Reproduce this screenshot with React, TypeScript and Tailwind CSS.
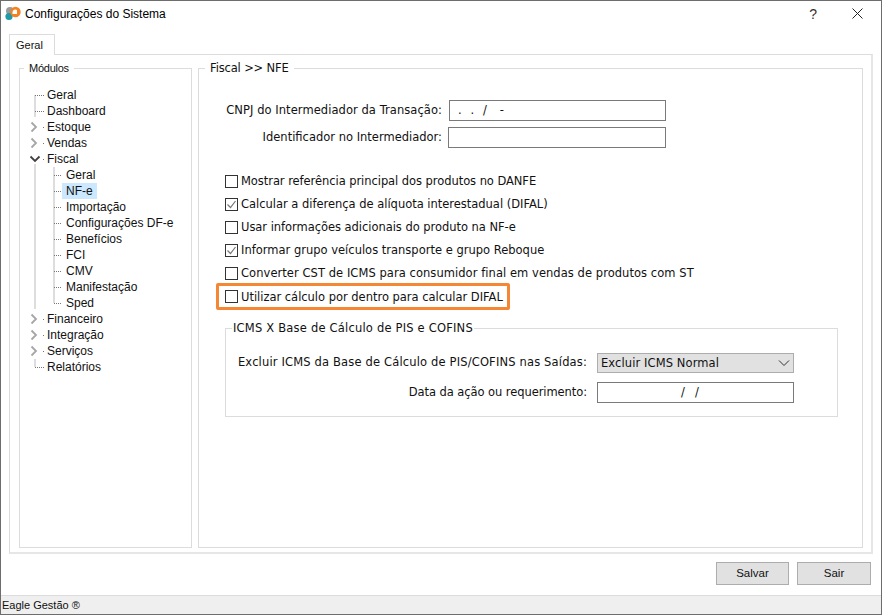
import React from "react";

const tahoma = "font-['Liberation_Sans',sans-serif]";
const verdana = "font-['DejaVu_Sans',sans-serif]";

type Row = {
  label: string;
  level: 0 | 1;
  chevron?: "right" | "down";
  guide: string;
  selected?: boolean;
};

const L1 = "M8 0V16M27 0V16M27 8H36";
const rows: Row[] = [
  { label: "Geral", level: 0, guide: "M8 8V16M8 8H17" },
  { label: "Dashboard", level: 0, guide: "M8 0V13M8 8H17" },
  { label: "Estoque", level: 0, chevron: "right", guide: "M16 8H17" },
  { label: "Vendas", level: 0, chevron: "right", guide: "M16 8H17" },
  { label: "Fiscal", level: 0, chevron: "down", guide: "M16 8H17M8 13V16" },
  { label: "Geral", level: 1, guide: L1 },
  { label: "NF-e", level: 1, selected: true, guide: "M8 0V16M27 0V16M27 8H35" },
  { label: "Importação", level: 1, guide: L1 },
  { label: "Configurações DF-e", level: 1, guide: L1 },
  { label: "Benefícios", level: 1, guide: L1 },
  { label: "FCI", level: 1, guide: L1 },
  { label: "CMV", level: 1, guide: L1 },
  { label: "Manifestação", level: 1, guide: L1 },
  { label: "Sped", level: 1, guide: "M8 0V14M27 0V8M27 8H36" },
  { label: "Financeiro", level: 0, chevron: "right", guide: "M16 8H17" },
  { label: "Integração", level: 0, chevron: "right", guide: "M16 8H17" },
  { label: "Serviços", level: 0, chevron: "right", guide: "M16 8H17" },
  { label: "Relatórios", level: 0, guide: "M8 0V8M8 8H17" },
];

function TreeRow({ row }: { row: Row }) {
  const w = row.level === 0 ? 20 : 35;
  return (
    <div className="flex h-4 items-center">
      <svg width={w} height={16} className="shrink-0" fill="none">
        <path d={row.guide} stroke="#777" strokeWidth="1" strokeDasharray="1 1" transform="translate(0 0.5)" />
        {row.chevron === "right" && <path d="M4.5 3.5L9 8L4.5 12.5" stroke="#a6a6a6" strokeWidth="1.8" />}
        {row.chevron === "down" && <path d="M3.5 5.5L8 10L12.5 5.5" stroke="#404040" strokeWidth="1.8" />}
      </svg>
      <span className={`h-4 whitespace-nowrap text-[12px] leading-4 ${row.level === 1 ? "px-1" : ""} ${row.selected ? "bg-[#cce8ff]" : ""}`}>
        {row.label}
      </span>
    </div>
  );
}

function Check({ checked, label, track }: { checked?: boolean; label: string; track: string }) {
  return (
    <div className="flex h-[14px] items-center gap-[3px]">
      <span className="flex h-[13px] w-[13px] shrink-0 items-center justify-center border border-[#333] bg-white">
        {checked && (
          <svg width="11" height="11" fill="none">
            <path d="M1.5 5.5L4.5 8.5L9.5 2" stroke="#777" strokeWidth="1.2" />
          </svg>
        )}
      </span>
      <span className={`whitespace-nowrap text-[11.5px] leading-[14px] ${track}`}>{label}</span>
    </div>
  );
}

export default function App() {
  return (
    <div className={`flex h-[615px] w-[882px] flex-col border border-[#6d6d6d] bg-white text-[#111] ${verdana}`}>
      <div className={`flex h-[29px] shrink-0 items-center pb-[4px] ${tahoma}`}>
        <svg width="17" height="15" viewBox="0 0 17 15" className="ml-[3px] shrink-0">
          <circle cx="6" cy="5" r="4" fill="#9a9a9a" />
          <circle cx="5" cy="10.5" r="3.6" fill="#1f9aa8" />
          <circle cx="11.5" cy="6" r="5.2" fill="#f58220" />
          <path d="M8.5 8V6A3 3 0 0 1 13 4V8Z" fill="#ffffff" />
        </svg>
        <span className="ml-[4px] text-[12px] leading-4 text-black">Configurações do Sistema</span>
        <span className="ml-auto mr-[35px] text-[14px] leading-4 text-[#333]">?</span>
        <svg width="11" height="11" className="mr-[18px]" fill="none">
          <path d="M0.5 0.5L10.5 10.5M10.5 0.5L0.5 10.5" stroke="#222" />
        </svg>
      </div>

      <div className="flex min-h-0 flex-1 flex-col px-[8px] pt-[4px]">
        <div className={`relative z-10 -mb-px flex h-[21px] w-[46px] items-center self-start border-x border-t border-[#dcdcdc] bg-white pl-[6px] text-[11px] ${tahoma}`}>
          Geral
        </div>
        <div className="flex h-[500px] gap-[6px] border-b-2 border-l border-r-2 border-t border-b-[#e6e6e6] border-l-[#dcdcdc] border-r-[#e6e6e6] border-t-[#dcdcdc] pl-[9px] pt-[6px]">
          <fieldset className={`h-[487px] w-[173px] shrink-0 border border-[#dcdcdc] ${tahoma}`}>
            <legend className="ml-[4px] px-[5px] text-[11px] leading-[14px] tracking-[-0.25px]">Módulos</legend>
            <div className="pl-[7px] pt-[12px]">
              {rows.map((r, i) => (
                <TreeRow key={i} row={r} />
              ))}
            </div>
          </fieldset>

          <fieldset className="h-[487px] w-[665px] shrink-0 border border-[#dcdcdc]">
            <legend className="ml-[6px] px-[5px] text-[11.5px] leading-[14px] tracking-[-0.15px]">Fiscal &gt;&gt; NFE</legend>
            <div className="flex flex-col pl-[26px] pt-[25px] text-[11.5px]">
              <div className="flex h-[21px] items-center">
                <span className="w-[217px] whitespace-nowrap text-right tracking-[0.06px]">CNPJ do Intermediador da Transação:</span>
                <div className="ml-[7px] h-[21px] w-[217px] border border-[#7a7a7a] pl-[8px] leading-[19px] tracking-[0.5px]">.&nbsp;&nbsp;.&nbsp;&nbsp;/&nbsp;&nbsp;&nbsp;-</div>
              </div>
              <div className="mt-[6px] flex h-[21px] items-center">
                <span className="w-[217px] whitespace-nowrap text-right">Identificador no Intermediador:</span>
                <div className="ml-[6px] h-[21px] w-[218px] border border-[#7a7a7a]"></div>
              </div>

              <div className="mt-[26px] flex flex-col gap-[9px]">
                <Check track="tracking-[-0.06px]" label="Mostrar referência principal dos produtos no DANFE" />
                <Check track="tracking-[-0.02px]" checked label="Calcular a diferença de alíquota interestadual (DIFAL)" />
                <Check track="tracking-[-0.04px]" label="Usar informações adicionais do produto na NF-e" />
                <Check track="tracking-[0px]" checked label="Informar grupo veículos transporte e grupo Reboque" />
                <Check track="tracking-[0.055px]" label="Converter CST de ICMS para consumidor final em vendas de produtos com ST" />
              </div>
              <div className="ml-[-9px] mt-[3px] flex h-[27px] w-[294px] items-center rounded-[2px] border-[3px] border-[#f58634] pl-[6px]">
                <Check track="tracking-[-0.02px]" label="Utilizar cálculo por dentro para calcular DIFAL" />
              </div>

              <fieldset className="mt-[11px] h-[96px] w-[613px] border border-[#dcdcdc]">
                <legend className="ml-[6px] px-px text-[11.5px] leading-[14px] tracking-[0.2px]">ICMS X Base de Cálculo de PIS e COFINS</legend>
                <div className="flex flex-col pt-[18px]">
                  <div className="flex h-[20px] items-center">
                    <span className="w-[361px] whitespace-nowrap text-right tracking-[0.16px]">Excluir ICMS da Base de Cálculo de PIS/COFINS nas Saídas:</span>
                    <div className="ml-[10px] flex h-[20px] w-[197px] items-center justify-between border border-[#adadad] bg-[#e1e1e1] pl-[3px] pr-[2px] pt-px">
                      <span className="tracking-[0.1px]">Excluir ICMS Normal</span>
                      <svg width="12" height="7" fill="none" className="mr-[1px]">
                        <path d="M1 0.5L6 5.5L11 0.5" stroke="#333" />
                      </svg>
                    </div>
                  </div>
                  <div className="mt-[9px] flex h-[21px] items-center">
                    <span className="w-[361px] whitespace-nowrap text-right tracking-[-0.07px]">Data da ação ou requerimento:</span>
                    <div className="ml-[10px] flex h-[21px] w-[197px] items-center gap-[10px] border border-[#7a7a7a] pl-[83px] leading-[19px]">
                      <span>/</span>
                      <span>/</span>
                    </div>
                  </div>
                </div>
              </fieldset>
            </div>
          </fieldset>
        </div>

        <div className={`flex justify-end gap-[8px] pr-[2px] pt-[8px] text-[11.5px] ${tahoma}`}>
          <div className="flex h-[23px] w-[73px] items-center justify-center border border-[#adadad] bg-[#e1e1e1]">Salvar</div>
          <div className="flex h-[23px] w-[74px] items-center justify-center border border-[#adadad] bg-[#e1e1e1]">Sair</div>
        </div>
      </div>

      <div className={`flex h-[19px] shrink-0 items-center border-t border-[#dcdcdc] bg-[#efefef] pl-px text-[11px] ${tahoma}`}>
        Eagle Gestão ®
      </div>
    </div>
  );
}
